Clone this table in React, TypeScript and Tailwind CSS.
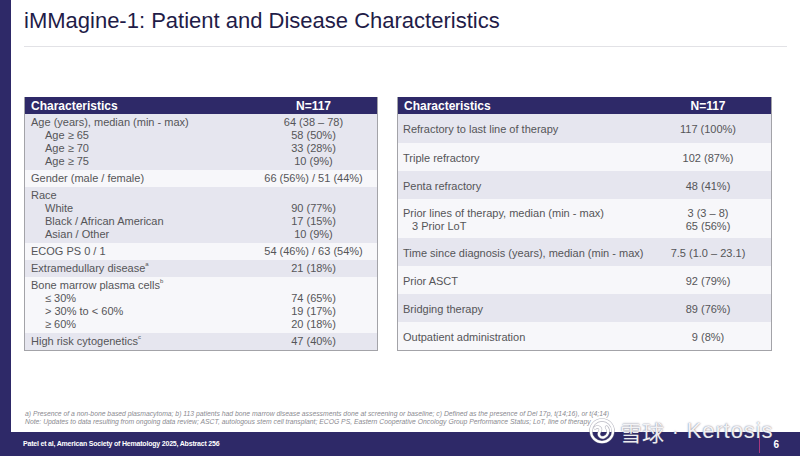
import React from 'react';

const PURPLE = 'bg-[#2e2968]';

type LeftRow = {
  lines: { label: React.ReactNode; value?: string; indent?: boolean }[];
  shade: boolean;
};

const leftRows: LeftRow[] = [
  {
    shade: true,
    lines: [
      { label: 'Age (years), median (min - max)', value: '64 (38 – 78)' },
      { label: 'Age ≥ 65', value: '58 (50%)', indent: true },
      { label: 'Age ≥ 70', value: '33 (28%)', indent: true },
      { label: 'Age ≥ 75', value: '10 (9%)', indent: true },
    ],
  },
  { shade: false, lines: [{ label: 'Gender (male / female)', value: '66 (56%) / 51 (44%)' }] },
  {
    shade: true,
    lines: [
      { label: 'Race' },
      { label: 'White', value: '90 (77%)', indent: true },
      { label: 'Black / African American', value: '17 (15%)', indent: true },
      { label: 'Asian / Other', value: '10 (9%)', indent: true },
    ],
  },
  { shade: false, lines: [{ label: 'ECOG PS 0 / 1', value: '54 (46%) / 63 (54%)' }] },
  {
    shade: true,
    lines: [
      {
        label: (
          <>
            Extramedullary disease<sup className="text-[6px] align-[3px]">a</sup>
          </>
        ),
        value: '21 (18%)',
      },
    ],
  },
  {
    shade: false,
    lines: [
      {
        label: (
          <>
            Bone marrow plasma cells<sup className="text-[6px] align-[3px]">b</sup>
          </>
        ),
      },
      { label: '≤ 30%', value: '74 (65%)', indent: true },
      { label: '> 30% to < 60%', value: '19 (17%)', indent: true },
      { label: '≥ 60%', value: '20 (18%)', indent: true },
    ],
  },
  {
    shade: true,
    lines: [
      {
        label: (
          <>
            High risk cytogenetics<sup className="text-[6px] align-[3px]">c</sup>
          </>
        ),
        value: '47 (40%)',
      },
    ],
  },
];

const rightRows: { lines: { label: string; value: string; indent?: boolean }[]; shade: boolean; h: string }[] = [
  { shade: true, h: 'h-[29px]', lines: [{ label: 'Refractory to last line of therapy', value: '117 (100%)' }] },
  { shade: false, h: 'h-[28px]', lines: [{ label: 'Triple refractory', value: '102 (87%)' }] },
  { shade: true, h: 'h-[28px]', lines: [{ label: 'Penta refractory', value: '48 (41%)' }] },
  {
    shade: false,
    h: 'h-[39px]',
    lines: [
      { label: 'Prior lines of therapy, median (min - max)', value: '3 (3 – 8)' },
      { label: '3 Prior LoT', value: '65 (56%)', indent: true },
    ],
  },
  { shade: true, h: 'h-[28px]', lines: [{ label: 'Time since diagnosis (years), median (min - max)', value: '7.5 (1.0 – 23.1)' }] },
  { shade: false, h: 'h-[28px]', lines: [{ label: 'Prior ASCT', value: '92 (79%)' }] },
  { shade: true, h: 'h-[28px]', lines: [{ label: 'Bridging therapy', value: '89 (76%)' }] },
  { shade: false, h: 'h-[28px]', lines: [{ label: 'Outpatient administration', value: '9 (8%)' }] },
];

function Header({ valueW }: { valueW: string }) {
  return (
    <div className={`flex h-[17px] items-center ${PURPLE} text-[12px] font-bold text-white`}>
      <div className="flex-1 pl-[6px]">Characteristics</div>
      <div className={`${valueW} text-center`}>N=117</div>
    </div>
  );
}

function LeftTable() {
  return (
    <div className="w-[354px] border border-[#a3a3a8] border-t-0">
      <Header valueW="w-[127px]" />
      {leftRows.map((row, i) => (
        <div key={i} className={`py-[2px] ${row.shade ? 'bg-[#e6e6ef]' : 'bg-[#f7f7fa]'}`}>
          {row.lines.map((l, j) => (
            <div key={j} className="flex h-[13px] items-center leading-[13px]">
              <div className={`flex-1 ${l.indent ? 'pl-[20px]' : 'pl-[6px]'}`}>{l.label}</div>
              <div className="w-[127px] text-center">{l.value}</div>
            </div>
          ))}
        </div>
      ))}
    </div>
  );
}

function RightTable() {
  return (
    <div className="w-[375px] border border-[#a3a3a8] border-t-0">
      <Header valueW="w-[126px]" />
      {rightRows.map((row, i) => (
        <div
          key={i}
          className={`flex flex-col justify-center pt-[2px] ${row.h} ${row.shade ? 'bg-[#e6e6ef]' : 'bg-[#f7f7fa]'}`}
        >
          {row.lines.map((l, j) => (
            <div key={j} className="flex h-[13px] items-center leading-[13px]">
              <div className={`flex-1 ${l.indent ? 'pl-[14px]' : 'pl-[5px]'}`}>{l.label}</div>
              <div className="w-[126px] text-center">{l.value}</div>
            </div>
          ))}
        </div>
      ))}
    </div>
  );
}

function SnowballLogo() {
  return (
    <svg width="26" height="26" viewBox="0 0 34 34" fill="none">
      <circle cx="17" cy="17" r="14.5" stroke="#7d7d90" strokeWidth="4.6" opacity="0.55" />
      <circle cx="17" cy="17" r="14.5" stroke="#ffffff" strokeWidth="3" />
      <path
        d="M8 13 C12 10 17 13 14 18 C11 22 15 27 20 25 C25 23 27 17 23 12"
        stroke="#7d7d90"
        strokeWidth="4.6"
        strokeLinecap="round"
        opacity="0.55"
      />
      <path
        d="M8 13 C12 10 17 13 14 18 C11 22 15 27 20 25 C25 23 27 17 23 12"
        stroke="#ffffff"
        strokeWidth="3"
        strokeLinecap="round"
      />
    </svg>
  );
}

export default function App() {
  return (
    <div className="relative flex h-[456px] w-[800px] flex-col overflow-hidden bg-white font-['Liberation_Sans',Arial,sans-serif]">
      <div className="flex flex-1">
        <div className={`w-[11px] ${PURPLE}`} />
        <div className="flex flex-1 flex-col pl-[13px] pr-[13px]">
          <h1 className="border-b border-[#e2e2e6] pb-[13px] pt-[8px] text-[22px] leading-[25px] text-[#1f1c48]">
            iMMagine-1: Patient and Disease Characteristics
          </h1>
          <div className="mt-[50px] flex gap-[19px] text-[11px] text-[#555558]">
            <LeftTable />
            <RightTable />
          </div>
          <div className="mt-[59px] pl-[1px] text-[6.8px] italic leading-[8px] text-[#8a8a90]">
            <p className="whitespace-nowrap">
              a) Presence of a non-bone based plasmacytoma; b) 113 patients had bone marrow disease assessments done at
              screening or baseline; c) Defined as the presence of Del 17p, t(14;16), or t(4;14)
            </p>
            <p className="whitespace-nowrap">
              Note: Updates to data resulting from ongoing data review; ASCT, autologous stem cell transplant; ECOG PS,
              Eastern Cooperative Oncology Group Performance Status; LoT, line of therapy
            </p>
          </div>
        </div>
      </div>
      <div className={`flex h-[24px] items-center ${PURPLE} pl-[23px] pr-[21px] text-white`}>
        <span className="flex-1 text-[7px] font-bold tracking-[-0.2px]">
          Patel et al, American Society of Hematology 2025, Abstract 256
        </span>
        <span className="mr-[13px] h-[17px] w-[1px] bg-[#a8387e]" />
        <span className="text-[10px] font-bold">6</span>
      </div>
      <div className="absolute left-[589px] top-[417px] flex items-center gap-[5px] whitespace-nowrap text-white/90 [text-shadow:0_0_1.5px_rgba(70,70,100,0.9)]">
        <SnowballLogo />
        <span className="font-['Noto_Sans_CJK_SC',sans-serif] text-[22px] leading-[28px]">雪球</span>
        <span className="mx-[3px] text-[20px] leading-[28px]">·</span>
        <span className="text-[22px] leading-[28px] tracking-[0.9px]">Kertosis</span>
      </div>
    </div>
  );
}
